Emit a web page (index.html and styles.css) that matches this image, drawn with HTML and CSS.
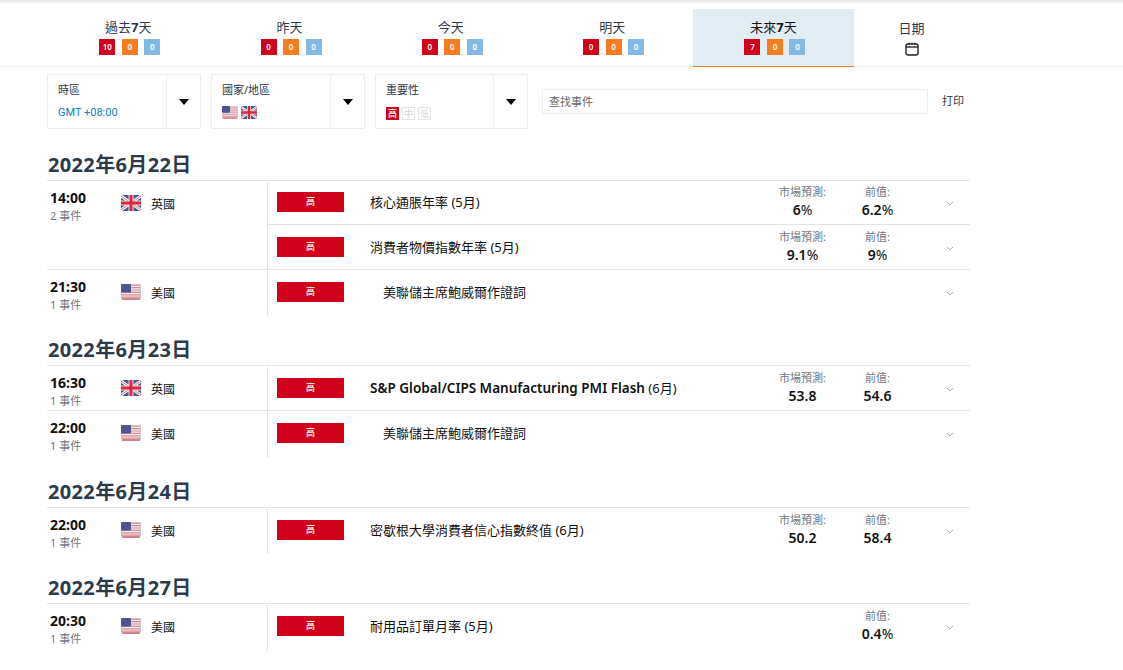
FILE: index.html
```html
<!DOCTYPE html>
<html lang="zh-Hant">
<head>
<meta charset="utf-8">
<title>財經日曆</title>
<link rel="stylesheet" href="styles.css">
</head>
<body>
<svg class="defs" width="0" height="0">
  <defs>
    <symbol id="flag-gb" viewBox="0 0 20 16">
      <rect width="20" height="16" rx="2" fill="#3f5a96"/>
      <path d="M0 1 L20 15 M20 1 L0 15" stroke="#fff" stroke-width="3"/>
      <path d="M0 1 L20 15 M20 1 L0 15" stroke="#d8677c" stroke-width="1"/>
      <path d="M10 0V16M0 8H20" stroke="#f6dde0" stroke-width="5"/>
      <path d="M10 0V16M0 8H20" stroke="#d9283c" stroke-width="3"/>
    </symbol>
    <symbol id="flag-us" viewBox="0 0 20 16">
      <rect width="20" height="16" rx="2" fill="#eee"/>
      <path d="M0 1.2H20M0 3.6H20M0 6H20M0 8.4H20M0 10.8H20M0 13.2H20" stroke="#d98b96" stroke-width="1.2"/>
      <path d="M1 15H19" stroke="#c23a50" stroke-width="1.2"/>
      <rect width="10" height="8.4" rx="1" fill="#4f5590"/>
    </symbol>
  </defs>
</svg>
<div class="topshade"></div>
<nav class="tabs">
  <div class="tab"><div class="tab-label">過去<b>7</b>天</div><div class="badges"><span class="badge red">10</span><span class="badge orange">0</span><span class="badge blue">0</span></div></div>
  <div class="tab"><div class="tab-label">昨天</div><div class="badges"><span class="badge red">0</span><span class="badge orange">0</span><span class="badge blue">0</span></div></div>
  <div class="tab"><div class="tab-label">今天</div><div class="badges"><span class="badge red">0</span><span class="badge orange">0</span><span class="badge blue">0</span></div></div>
  <div class="tab"><div class="tab-label">明天</div><div class="badges"><span class="badge red">0</span><span class="badge orange">0</span><span class="badge blue">0</span></div></div>
  <div class="tab active"><div class="tab-label">未來<b>7</b>天</div><div class="badges"><span class="badge red">7</span><span class="badge orange">0</span><span class="badge blue">0</span></div></div>
  <div class="tab date"><div class="tab-label">日期</div>
    <svg class="cal" width="14" height="14" viewBox="0 0 14 14"><rect x="1" y="2" width="12" height="11" rx="2" fill="none" stroke="#222" stroke-width="1.4"/><path d="M1 5H13" stroke="#222" stroke-width="1.4"/><path d="M4 0.5V2.5M7 0.5V2.5M10 0.5V2.5" stroke="#222" stroke-width="1"/></svg>
  </div>
</nav>
<div class="filters">
  <div class="filter"><div class="filter-main"><div class="filter-label">時區</div><div class="filter-value tz">GMT +08:00</div></div><div class="filter-arrow"><i class="caret"></i></div></div>
  <div class="filter"><div class="filter-main"><div class="filter-label">國家/地區</div><div class="filter-value flags"><svg class="flag-s"><use href="#flag-us"/></svg><svg class="flag-s"><use href="#flag-gb"/></svg></div></div><div class="filter-arrow"><i class="caret"></i></div></div>
  <div class="filter narrow"><div class="filter-main"><div class="filter-label">重要性</div><div class="filter-value imps"><span class="imp on">高</span><span class="imp">中</span><span class="imp">低</span></div></div><div class="filter-arrow"><i class="caret"></i></div></div>
  <div class="search">查找事件</div>
  <div class="print">打印</div>
</div>
<main class="calendar">
  <section class="day">
    <h2>2022年6月22日</h2>
    <div class="group">
      <div class="when"><div class="time-box"><div class="time">14:00</div><div class="count">2 事件</div></div><svg class="flag"><use href="#flag-gb"/></svg><span class="country">英國</span></div>
      <div class="events">
        <div class="event first"><span class="bar">高</span><span class="title">核心通脹年率 (5月)</span><div class="stat"><span class="k">市場預測:</span><span class="v">6<small>%</small></span></div><div class="stat"><span class="k">前值:</span><span class="v">6.2<small>%</small></span></div><svg class="chev" width="8" height="5" viewBox="0 0 8 5"><path d="M1 1L4 4L7 1" fill="none" stroke="#aab" stroke-width="1"/></svg></div>
        <div class="event"><span class="bar">高</span><span class="title">消費者物價指數年率 (5月)</span><div class="stat"><span class="k">市場預測:</span><span class="v">9.1<small>%</small></span></div><div class="stat"><span class="k">前值:</span><span class="v">9<small>%</small></span></div><svg class="chev" width="8" height="5" viewBox="0 0 8 5"><path d="M1 1L4 4L7 1" fill="none" stroke="#aab" stroke-width="1"/></svg></div>
      </div>
    </div>
    <div class="group">
      <div class="when"><div class="time-box"><div class="time">21:30</div><div class="count">1 事件</div></div><svg class="flag"><use href="#flag-us"/></svg><span class="country">美國</span></div>
      <div class="events"><div class="event last"><span class="bar">高</span><span class="title speech">美聯儲主席鮑威爾作證詞</span><svg class="chev" width="8" height="5" viewBox="0 0 8 5"><path d="M1 1L4 4L7 1" fill="none" stroke="#aab" stroke-width="1"/></svg></div></div>
    </div>
  </section>
  <section class="day">
    <h2>2022年6月23日</h2>
    <div class="group">
      <div class="when"><div class="time-box"><div class="time">16:30</div><div class="count">1 事件</div></div><svg class="flag"><use href="#flag-gb"/></svg><span class="country">英國</span></div>
      <div class="events"><div class="event"><span class="bar">高</span><span class="title"><b>S&amp;P Global/CIPS Manufacturing PMI Flash</b> (6月)</span><div class="stat"><span class="k">市場預測:</span><span class="v">53.8</span></div><div class="stat"><span class="k">前值:</span><span class="v">54.6</span></div><svg class="chev" width="8" height="5" viewBox="0 0 8 5"><path d="M1 1L4 4L7 1" fill="none" stroke="#aab" stroke-width="1"/></svg></div></div>
    </div>
    <div class="group">
      <div class="when"><div class="time-box"><div class="time">22:00</div><div class="count">1 事件</div></div><svg class="flag"><use href="#flag-us"/></svg><span class="country">美國</span></div>
      <div class="events"><div class="event last"><span class="bar">高</span><span class="title speech">美聯儲主席鮑威爾作證詞</span><svg class="chev" width="8" height="5" viewBox="0 0 8 5"><path d="M1 1L4 4L7 1" fill="none" stroke="#aab" stroke-width="1"/></svg></div></div>
    </div>
  </section>
  <section class="day">
    <h2>2022年6月24日</h2>
    <div class="group">
      <div class="when"><div class="time-box"><div class="time">22:00</div><div class="count">1 事件</div></div><svg class="flag"><use href="#flag-us"/></svg><span class="country">美國</span></div>
      <div class="events"><div class="event last"><span class="bar">高</span><span class="title">密歇根大學消費者信心指數終值 (6月)</span><div class="stat"><span class="k">市場預測:</span><span class="v">50.2</span></div><div class="stat"><span class="k">前值:</span><span class="v">58.4</span></div><svg class="chev" width="8" height="5" viewBox="0 0 8 5"><path d="M1 1L4 4L7 1" fill="none" stroke="#aab" stroke-width="1"/></svg></div></div>
    </div>
  </section>
  <section class="day">
    <h2>2022年6月27日</h2>
    <div class="group">
      <div class="when"><div class="time-box"><div class="time">20:30</div><div class="count">1 事件</div></div><svg class="flag"><use href="#flag-us"/></svg><span class="country">美國</span></div>
      <div class="events"><div class="event last"><span class="bar">高</span><span class="title">耐用品訂單月率 (5月)</span><div class="stat"><span class="k">前值:</span><span class="v">0.4<small>%</small></span></div><svg class="chev" width="8" height="5" viewBox="0 0 8 5"><path d="M1 1L4 4L7 1" fill="none" stroke="#aab" stroke-width="1"/></svg></div></div>
    </div>
  </section>
</main>
</body>
</html>
```
FILE: styles.css
```css
* { box-sizing: border-box; }
html, body { margin: 0; padding: 0; height: 100%; overflow: hidden; }
body {
  background: #fff;
  color: #2d3a4a;
  font-family: "Noto Sans", "Noto Sans CJK TC", sans-serif;
  font-size: 12px;
}
.defs { display: block; height: 0; }
.topshade { height: 4px; background: linear-gradient(#e6e6e6, #fff); }

.tabs {
  display: flex;
  height: 63px;
  padding: 5px 0 0 47.6px;
  border-bottom: 1px solid #eee;
}
.tab {
  width: 161.3px;
  height: 58px;
  display: flex;
  flex-direction: column;
  align-items: center;
  padding-top: 9px;
}
.tab.date { width: 115px; padding-top: 10px; }
.tab.active { background: #e2edf3; border-bottom: 1px solid #f47c20; color: #111; }
.tab-label { font-size: 13px; line-height: 18px; margin-bottom: 3px; }
.tab-label b { font-weight: 700; }
.badges { display: flex; gap: 6.5px; margin-left: 3px; }
.badge {
  width: 16px;
  height: 16px;
  color: #fff;
  font-size: 8px;
  font-weight: 600;
  line-height: 16px;
  text-align: center;
}
.red { background: #d0021b; }
.orange { background: #f57c21; }
.blue { background: #83b9e5; }
.cal { display: block; margin-top: 2px; }

.filters {
  display: flex;
  align-items: flex-start;
  padding: 7px 0 0 47px;
}
.filter {
  width: 154px;
  height: 55px;
  margin-right: 10px;
  display: flex;
  border: 1px solid #eee;
}
.filter.narrow { width: 153px; }
.filter-main { flex: 1; padding: 7px 0 0 10px; }
.filter-label { font-size: 11px; line-height: 16px; }
.filter-value { margin-top: 7px; height: 16px; }
.tz { color: #0b7fc2; font-family: Roboto, "Noto Sans", sans-serif; font-size: 11px; line-height: 16px; }
.flags { display: flex; gap: 3px; }
.flag-s { width: 16px; height: 13px; margin-top: 1px; }
.filter-arrow {
  width: 34px;
  border-left: 1px solid #eee;
  display: flex;
  align-items: center;
  justify-content: center;
}
.caret {
  display: block;
  border-left: 5px solid transparent;
  border-right: 5px solid transparent;
  border-top: 6px solid #000;
}
.imps { display: flex; gap: 3px; margin-top: 9px; }
.imp {
  width: 13px;
  height: 13px;
  border: 1px solid #e4e4e4;
  color: #d6d6d6;
  font-size: 9px;
  line-height: 11px;
  text-align: center;
}
.imp.on { background: #d0021b; border-color: #d0021b; color: #fff; font-weight: 500; }
.search {
  width: 386px;
  height: 25px;
  margin: 15px 14px 0 4px;
  padding-left: 6px;
  border: 1px solid #eee;
  color: #666;
  font-size: 11px;
  line-height: 23px;
}
.print { margin-top: 19px; font-size: 11px; line-height: 16px; }

.calendar { width: 923px; margin-left: 47px; margin-top: 20px; }
.day { margin-bottom: 18px; }
h2 {
  margin: 0;
  height: 31px;
  padding-left: 1px;
  font-size: 20px;
  letter-spacing: 0.35px;
  line-height: 31px;
  font-weight: 700;
  color: #2d3a4a;
}
.group { display: flex; border-top: 1px solid #e3e3e3; }
.when {
  width: 221px;
  display: flex;
  align-items: flex-start;
  padding: 7px 0 0 3px;
  border-right: 1px solid #e3e3e3;
  margin-top: 1px;
}
.time-box { width: 71px; }
.time { font-size: 14px; font-weight: 700; line-height: 17px; color: #111; }
.count { margin-top: 2px; font-size: 11px; line-height: 15px; color: #707780; }
.flag { width: 20px; height: 16px; margin-top: 6px; }
.country { margin: 8px 0 0 10px; font-size: 12px; line-height: 16px; color: #111; }
.events { flex: 1; }
.event {
  height: 45px;
  display: flex;
  align-items: flex-start;
  padding: 12px 0 0 9px;
  border-top: 1px solid #e3e3e3;
}
.event:first-child { height: 44px; border-top: 0; }
.event.first { height: 43px; padding-top: 11px; }
.event.last { height: 46.4px; }
.bar {
  width: 67px;
  height: 20px;
  background: #d0021b;
  color: #fff;
  font-size: 9px;
  font-weight: 500;
  line-height: 20px;
  text-align: center;
}
.title { flex: 1; margin-left: 26px; font-size: 13px; line-height: 20px; color: #111; }
.title b { font-weight: 600; font-size: 13.5px; }
.title.speech { padding-left: 13px; }
.stat {
  width: 75px;
  margin-top: -8px;
  display: flex;
  flex-direction: column;
  align-items: center;
}
.k { font-size: 11px; line-height: 16px; color: #707780; }
.v { font-size: 14px; font-weight: 600; line-height: 20px; color: #111; }
.v small { font-size: 14px; font-weight: 400; }
.chev { margin: 9px 16px 0 31px; flex: none; }
```
